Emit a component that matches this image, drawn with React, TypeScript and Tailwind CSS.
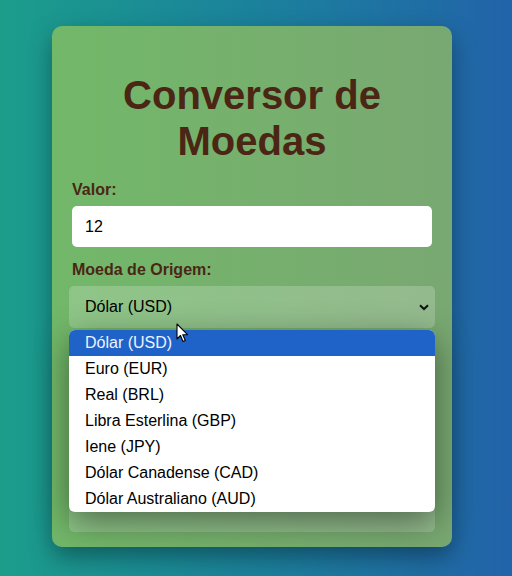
import { useState } from "react"

const moedas = [
  "Dólar (USD)",
  "Euro (EUR)",
  "Real (BRL)",
  "Libra Esterlina (GBP)",
  "Iene (JPY)",
  "Dólar Canadense (CAD)",
  "Dólar Australiano (AUD)",
]

function Cursor() {
  return (
    <svg width="13" height="20" viewBox="0 0 13 20" className="absolute left-[107px] top-[37px] z-20">
      <path
        d="M1 1 L1 16 L4.5 12.5 L7 18.5 L9.3 17.5 L6.8 11.7 L11.5 11.7 Z"
        fill="white"
        stroke="black"
        strokeWidth="1.1"
        strokeLinejoin="round"
      />
    </svg>
  )
}

export default function App() {
  const [valor, setValor] = useState("12")

  return (
    <div className="min-h-[576px] w-full bg-gradient-to-r from-[#1c9d8b] to-[#2263a9] pt-[26px] font-['Liberation_Sans',Arial,sans-serif]">
      <div className="ml-[52px] w-[400px] h-[521px] rounded-[10px] bg-gradient-to-r from-[#72b869] to-[#79a872] px-5 pt-5 shadow-[0_10px_24px_rgba(0,0,0,0.35)]">
        <h1 className="mt-[26px] mb-[17px] text-center text-[40px] font-bold leading-[46px] text-[#4b2614]">
          Conversor de Moedas
        </h1>

        <label className="block mb-[7px] text-base font-bold leading-[18px] text-[#4b2614]">Valor:</label>
        <input
          value={valor}
          onChange={(e) => setValor(e.target.value)}
          className="block w-full h-[41px] rounded-[5px] bg-white px-[13px] text-base text-black outline-none"
        />

        <label className="block mt-[14px] mb-[7px] text-base font-bold leading-[18px] text-[#4b2614]">
          Moeda de Origem:
        </label>
        <div className="relative -mx-[3px]">
          <div className="flex h-[42px] items-center justify-between rounded-[5px] bg-white/20 pl-4 pr-[6px] text-base text-black">
            <span>Dólar (USD)</span>
            <svg width="10" height="7" viewBox="0 0 10 7">
              <path d="M1 1.2 L5 5 L9 1.2" fill="none" stroke="#111" strokeWidth="2" />
            </svg>
          </div>

          <Cursor />

          {/* lista aberta do select */}
          <ul className="absolute left-0 right-0 top-[44px] z-10 overflow-hidden rounded-[6px] bg-white shadow-[0_10px_34px_rgba(0,0,0,0.45)]">
            {moedas.map((m, i) => (
              <li
                key={m}
                className={`h-[26px] pl-4 text-base leading-[26px] ${
                  i === 0 ? "bg-[#1f63c9] text-[#eef2ff]" : "text-black"
                }`}
              >
                {m}
              </li>
            ))}
          </ul>

          {/* resto do formulário, escondido atrás da lista */}
          <div className="mt-[42px] h-[42px] rounded-[5px] bg-white/20" />
          <div className="mt-[78px] h-[42px] rounded-[5px] bg-white/20" />
        </div>
      </div>
    </div>
  )
}
